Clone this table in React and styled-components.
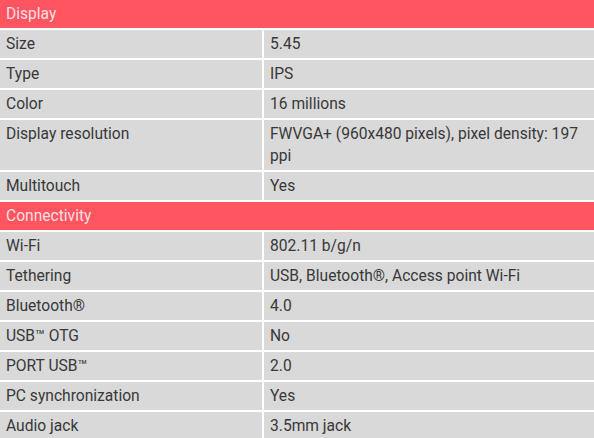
import React from "react";
import styled, { createGlobalStyle } from "styled-components";

const sections = [
  {
    title: "Display",
    rows: [
      ["Size", "5.45"],
      ["Type", "IPS"],
      ["Color", "16 millions"],
      ["Display resolution", "FWVGA+ (960x480 pixels), pixel density: 197 ppi"],
      ["Multitouch", "Yes"],
    ],
  },
  {
    title: "Connectivity",
    rows: [
      ["Wi-Fi", "802.11 b/g/n"],
      ["Tethering", "USB, Bluetooth®, Access point Wi-Fi"],
      ["Bluetooth®", "4.0"],
      ["USB™ OTG", "No"],
      ["PORT USB™", "2.0"],
      ["PC synchronization", "Yes"],
      ["Audio jack", "3.5mm jack"],
    ],
  },
];

const App = () => {
  return (
    <>
      <GlobalStyle />
      <Table>
        {sections.map((section) => (
          <React.Fragment key={section.title}>
            <SectionHead>{section.title}</SectionHead>
            {section.rows.map(([label, value]) => (
              <Row key={label}>
                <Cell>{label}</Cell>
                <Cell>{value}</Cell>
              </Row>
            ))}
          </React.Fragment>
        ))}
      </Table>
    </>
  );
};

export default App;

const GlobalStyle = createGlobalStyle`
  body {
    margin: 0;
    background: #ffffff;
    font-family: Roboto, "Liberation Sans", sans-serif;
  }
`;

const Table = styled.div`
  display: flex;
  flex-direction: column;
  gap: 1.7px;
  width: 594px;
`;

const SectionHead = styled.div`
  background: #ff5561;
  color: #ffdfe2;
  font-size: 15.6px;
  line-height: 22px;
  padding: 3.15px 6px;
`;

const Row = styled.div`
  display: grid;
  grid-template-columns: 262px 1fr;
  column-gap: 2px;
`;

const Cell = styled.div`
  background: #d9d9d9;
  color: #383838;
  font-size: 15.6px;
  line-height: 22px;
  padding: 3.15px 8px 3.15px 6px;
`;
